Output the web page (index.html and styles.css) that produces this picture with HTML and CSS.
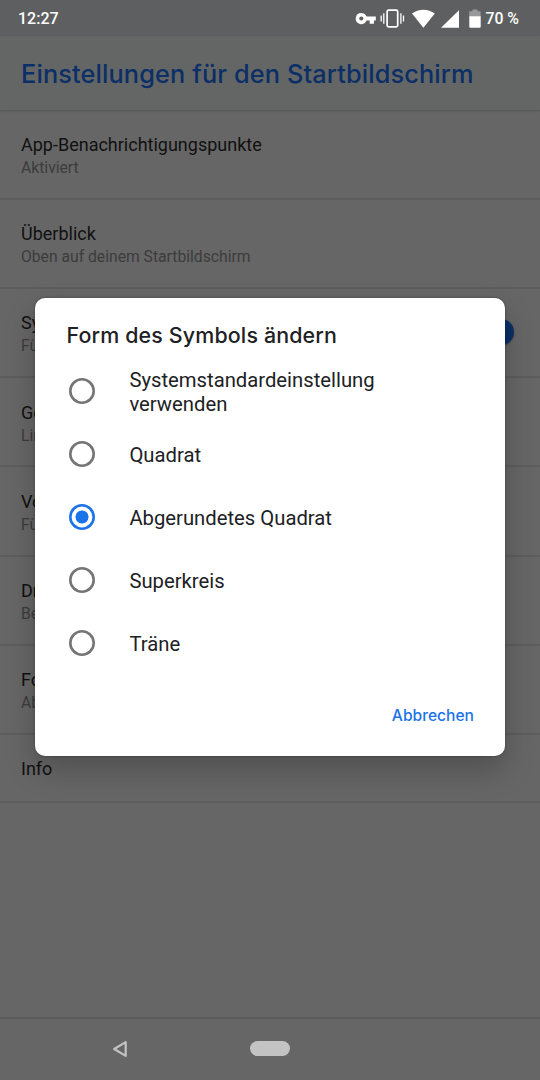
FILE: index.html
```html
<!DOCTYPE html>
<html lang="de">
<head>
    <meta charset="UTF-8">
    <meta name="viewport" content="width=device-width, initial-scale=1.0">
    <title>Einstellungen für den Startbildschirm</title>
    <link rel="stylesheet" href="styles.css">
</head>
<body>
    <div class="screen">
        <div class="status-bar">
            <span class="time">12:27</span>
            <svg class="status-icons" width="128" height="24" viewBox="0 0 128 24">
                <!-- VPN key -->
                <path fill="#fff" fill-rule="evenodd" d="M6.3 6.9a5.6 5.6 0 0 1 5.2 3.6h9.3v4.1h-1.9v3.1h-4.2v-3.1h-3.2a5.6 5.6 0 1 1-5.2-7.7zm0 3.5a2.1 2.1 0 1 0 0 4.2 2.1 2.1 0 0 0 0-4.2z"/>
                <!-- vibrate -->
                <rect x="32.1" y="4.2" width="10.6" height="16.6" rx="1.6" fill="none" stroke="#fff" stroke-width="1.7"/>
                <path d="M28.8 7.2v10.6M45.9 7.2v10.6M26.2 9.5v6M48.5 9.5v6" stroke="#fff" stroke-width="1.3"/>
                <!-- wifi -->
                <path fill="#fff" d="M57 7.5C63.5 2.4 73.3 2.4 79.8 7.5L68.4 21.7z"/>
                <!-- signal -->
                <path fill="#fff" d="M104 4.2v17.5H86z"/>
                <!-- battery -->
                <path fill="#999" d="M117.5 3.4h5v1.8h3.1v5.6h-11.4V5.2h3.2z"/>
                <path fill="#fff" d="M114.3 10.2h11.4v10.6q0 1-1 1h-9.4q-1 0-1-1z"/>
            </svg>
            <span class="percent">70 %</span>
        </div>

        <div class="app-bar">
            <h1>Einstellungen für den Startbildschirm</h1>
        </div>

        <div class="settings">
            <div class="item first">
                <div class="item-title">App-Benachrichtigungspunkte</div>
                <div class="item-summary">Aktiviert</div>
            </div>
            <div class="item">
                <div class="item-title">Überblick</div>
                <div class="item-summary">Oben auf deinem Startbildschirm</div>
            </div>
            <div class="item with-switch">
                <div>
                    <div class="item-title">Sy</div>
                    <div class="item-summary">Fü</div>
                </div>
                <div class="switch"></div>
            </div>
            <div class="item">
                <div class="item-title">Go</div>
                <div class="item-summary">Lin</div>
            </div>
            <div class="item">
                <div class="item-title">Vo</div>
                <div class="item-summary">Fü</div>
            </div>
            <div class="item">
                <div class="item-title">Dr</div>
                <div class="item-summary">Be</div>
            </div>
            <div class="item">
                <div class="item-title">Fo</div>
                <div class="item-summary">Ab</div>
            </div>
            <div class="item info">
                <div class="item-title">Info</div>
            </div>
        </div>

        <div class="nav-bar">
            <svg class="back" width="16" height="18" viewBox="0 0 16 18">
                <path d="M13.7 2.1v13.8L2.2 9z" fill="none" stroke="#c3c3c3" stroke-width="2.2" stroke-linejoin="round"/>
            </svg>
            <div class="home"></div>
        </div>
    </div>

    <div class="dialog">
        <h2>Form des Symbols ändern</h2>
        <div class="options">
            <div class="option">
                <span class="radio"></span>
                <span class="option-label">Systemstandardeinstellung verwenden</span>
            </div>
            <div class="option">
                <span class="radio"></span>
                <span class="option-label">Quadrat</span>
            </div>
            <div class="option">
                <span class="radio checked"></span>
                <span class="option-label">Abgerundetes Quadrat</span>
            </div>
            <div class="option">
                <span class="radio"></span>
                <span class="option-label">Superkreis</span>
            </div>
            <div class="option">
                <span class="radio"></span>
                <span class="option-label">Träne</span>
            </div>
        </div>
        <div class="actions">
            <button class="cancel">Abbrechen</button>
        </div>
    </div>
</body>
</html>
```
FILE: styles.css
```css
* {
    margin: 0;
    padding: 0;
    box-sizing: border-box;
}

body {
    width: 540px;
    height: 1080px;
    position: relative;
    overflow: hidden;
    font-family: Roboto, sans-serif;
    background: #666;
}

.screen {
    height: 1080px;
    display: flex;
    flex-direction: column;
}

/* Status bar */
.status-bar {
    height: 36px;
    flex-shrink: 0;
    display: flex;
    align-items: center;
    padding: 1px 21px 0 18px;
    background: #5e5f60;
    color: #fff;
    font-size: 16px;
    font-weight: 500;
}

.status-icons {
    margin: -1px 2.4px 0 auto;
}

.percent {
    font-size: 15.8px;
}

/* Header */
.app-bar {
    height: 74px;
    flex-shrink: 0;
    display: flex;
    align-items: center;
    padding-left: 21px;
    background: #646665;
    box-shadow: 0 1px 2px rgba(0, 0, 0, 0.18);
}

h1 {
    font-family: Inter, sans-serif;
    font-size: 25.3px;
    font-weight: 500;
    letter-spacing: 0.13px;
    color: #0b2f66;
    white-space: nowrap;
}

/* Settings list */
.settings {
    flex: 1;
}

.item {
    height: 89.27px;
    padding: 22.6px 21px 0;
    border-bottom: 2px solid #5d5d5d;
}

.item.first {
    height: 89.5px;
}

.item.info {
    height: 68px;
    padding-top: 21.8px;
}

.item-title {
    font-size: 18px;
    line-height: 23px;
    color: #111;
    white-space: nowrap;
}

.item-summary {
    font-size: 15.7px;
    line-height: 23px;
    color: #3c3c3c;
    white-space: nowrap;
}

.with-switch {
    display: flex;
    justify-content: space-between;
    padding-right: 26px;
}

.switch {
    width: 26px;
    height: 26px;
    margin-top: 8px;
    border-radius: 50%;
    background: #0b2f66;
    box-shadow: 0 1px 2px rgba(0, 0, 0, 0.3);
}

/* Navigation bar */
.nav-bar {
    height: 63px;
    flex-shrink: 0;
    display: flex;
    align-items: center;
    padding: 0 0 2px 112px;
    border-top: 2px solid #5b5b5b;
}

.home {
    width: 40px;
    height: 15px;
    margin-left: 122px;
    border-radius: 8px;
    background: #c3c3c3;
}

/* Dialog */
.dialog {
    position: absolute;
    left: 35px;
    top: 298px;
    width: 470px;
    height: 458px;
    padding: 22px 31px 0;
    border-radius: 10px;
    background: #fff;
    box-shadow: 0 14px 30px rgba(0, 0, 0, 0.22), 0 0 3px rgba(0, 0, 0, 0.3);
}

h2 {
    padding-left: 0.5px;
    font-family: Inter, sans-serif;
    font-size: 21.4px;
    font-weight: 500;
    line-height: 30px;
    letter-spacing: 0.15px;
    color: #202124;
}

.options {
    margin-top: 10px;
}

.option {
    height: 63px;
    display: flex;
    align-items: center;
    gap: 34.4px;
    padding-left: 3px;
}

.radio {
    width: 26px;
    height: 26px;
    margin-bottom: 1px;
    flex-shrink: 0;
    border-radius: 50%;
    box-shadow: inset 0 0 0 2.6px #757575;
}

.radio.checked {
    background: radial-gradient(circle, #1a73e8 6.2px, #fff 6.8px);
    box-shadow: inset 0 0 0 2.6px #1a73e8;
}

.option-label {
    width: 270px;
    font-size: 20.25px;
    line-height: 24px;
    color: #202124;
}

.actions {
    display: flex;
    justify-content: flex-end;
    margin-top: 29px;
}

.cancel {
    border: none;
    background: none;
    font-family: Inter, sans-serif;
    font-size: 15.6px;
    font-weight: 500;
    line-height: 24px;
    color: #1a73e8;
    cursor: pointer;
}
```
